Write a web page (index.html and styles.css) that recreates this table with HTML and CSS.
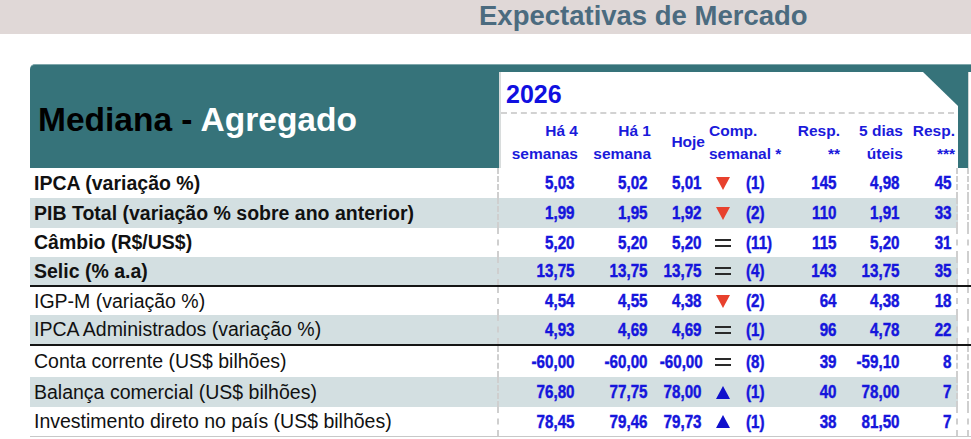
FILE: index.html
```html
<!DOCTYPE html>
<html lang="pt-BR">
<head>
<meta charset="utf-8">
<title>Expectativas de Mercado</title>
<link rel="stylesheet" href="styles.css">
</head>
<body>
<header class="banner"><h1 class="banner-title">Expectativas de Mercado</h1></header>

<section class="board">
  <div class="head">
    <div class="head-title"><span class="dark">Mediana -</span> Agregado</div>
    <div class="year-panel">
      <div class="year">2026</div>
      <div class="cols head-cols">
        <div class="hc">Há 4<br>semanas</div>
        <div class="hc">Há 1<br>semana</div>
        <div class="hc mid">Hoje</div>
        <div class="hc left">Comp.<br>semanal *</div>
        <div class="hc">Resp.<br>**</div>
        <div class="hc">5 dias<br>úteis</div>
        <div class="hc">Resp.<br>***</div>
      </div>
    </div>
    <div class="next-panel"></div>
  </div>

  <div class="body">
    <div class="row h30 bold">
      <div class="label">IPCA (variação %)</div>
      <div class="cols data"><span class="n">5,03</span><span class="n">5,02</span><span class="n">5,01</span><span class="comp"><i class="tri down"></i><span class="p">(1)</span></span><span class="n">145</span><span class="n">4,98</span><span class="n">45</span></div>
      <div class="next"></div>
    </div>
    <div class="row h30 bold shade">
      <div class="label">PIB Total (variação % sobre ano anterior)</div>
      <div class="cols data"><span class="n">1,99</span><span class="n">1,95</span><span class="n">1,92</span><span class="comp"><i class="tri down"></i><span class="p">(2)</span></span><span class="n">110</span><span class="n">1,91</span><span class="n">33</span></div>
      <div class="next"></div>
    </div>
    <div class="row h29 bold">
      <div class="label">Câmbio (R$/US$)</div>
      <div class="cols data"><span class="n">5,20</span><span class="n">5,20</span><span class="n">5,20</span><span class="comp"><i class="eq"></i><span class="p">(11)</span></span><span class="n">115</span><span class="n">5,20</span><span class="n">31</span></div>
      <div class="next"></div>
    </div>
    <div class="row h28 bold shade">
      <div class="label">Selic (% a.a)</div>
      <div class="cols data"><span class="n">13,75</span><span class="n">13,75</span><span class="n">13,75</span><span class="comp"><i class="eq"></i><span class="p">(4)</span></span><span class="n">143</span><span class="n">13,75</span><span class="n">35</span></div>
      <div class="next"></div>
    </div>

    <div class="row h30 sep">
      <div class="label">IGP-M (variação %)</div>
      <div class="cols data"><span class="n">4,54</span><span class="n">4,55</span><span class="n">4,38</span><span class="comp"><i class="tri down"></i><span class="p">(2)</span></span><span class="n">64</span><span class="n">4,38</span><span class="n">18</span></div>
      <div class="next"></div>
    </div>
    <div class="row h29 shade">
      <div class="label">IPCA Administrados (variação %)</div>
      <div class="cols data"><span class="n">4,93</span><span class="n">4,69</span><span class="n">4,69</span><span class="comp"><i class="eq"></i><span class="p">(1)</span></span><span class="n">96</span><span class="n">4,78</span><span class="n">22</span></div>
      <div class="next"></div>
    </div>

    <div class="row h33 sep">
      <div class="label">Conta corrente (US$ bilhões)</div>
      <div class="cols data"><span class="n">-60,00</span><span class="n">-60,00</span><span class="n">-60,00</span><span class="comp"><i class="eq"></i><span class="p">(8)</span></span><span class="n">39</span><span class="n">-59,10</span><span class="n">8</span></div>
      <div class="next"></div>
    </div>
    <div class="row h30 shade">
      <div class="label">Balança comercial (US$ bilhões)</div>
      <div class="cols data"><span class="n">76,80</span><span class="n">77,75</span><span class="n">78,00</span><span class="comp"><i class="tri up"></i><span class="p">(1)</span></span><span class="n">40</span><span class="n">78,00</span><span class="n">7</span></div>
      <div class="next"></div>
    </div>
    <div class="row h30 last">
      <div class="label">Investimento direto no país (US$ bilhões)</div>
      <div class="cols data"><span class="n">78,45</span><span class="n">79,46</span><span class="n">79,73</span><span class="comp"><i class="tri up"></i><span class="p">(1)</span></span><span class="n">38</span><span class="n">81,50</span><span class="n">7</span></div>
      <div class="next"></div>
    </div>
  </div>
</section>
</body>
</html>
```

FILE: styles.css
```css
html, body {
  margin: 0;
  padding: 0;
  background: #ffffff;
  font-family: "Liberation Sans", Arial, sans-serif;
  overflow: hidden;
}

.banner {
  height: 34px;
  background: #e0d8d7;
}

.banner-title {
  margin: 0;
  padding-left: 479px;
  font-size: 27.5px;
  line-height: 31px;
  font-weight: bold;
  color: #4b6b7f;
  white-space: nowrap;
}

.board {
  margin-top: 30px;
  margin-left: 30px;
  width: 942px;
}

/* ---------- header ---------- */
.head {
  display: grid;
  grid-template-columns: 469px 459px 14px;
  height: 104px;
  background: #36737a;
  border-top: 1px solid #7fa7ab;
  border-top-left-radius: 5px;
  box-sizing: border-box;
}

.head-title {
  padding: 37px 0 0 8px;
  font-size: 33.5px;
  line-height: 36px;
  font-weight: bold;
  color: #ffffff;
  white-space: nowrap;
}

.head-title .dark {
  color: #000000;
}

.year-panel {
  margin-top: 7px;
  background: #ffffff;
  border-left: 2px solid #d8dcdc;
  clip-path: polygon(0 0, 424px 0, 459px 34px, 459px 100%, 0 100%);
}

.year {
  margin-right: 4px;
  padding: 8px 0 4px 5px;
  font-size: 25px;
  line-height: 28px;
  font-weight: bold;
  color: #1010e0;
  border-bottom: 2px dashed #d2d2d2;
}

.cols {
  display: grid;
  grid-template-columns: 78px 73px 54px 84px 51px 63px 52px;
}

.head-cols {
  padding-top: 5px;
}

.hc {
  font-size: 15.5px;
  line-height: 23px;
  font-weight: bold;
  color: #1a1adb;
  text-align: right;
  padding-right: 1px;
  white-space: nowrap;
}

.hc.mid {
  align-self: center;
  padding-bottom: 2px;
}

.hc.left {
  text-align: left;
  padding-left: 3px;
  padding-right: 0;
}

.next-panel {
  margin: 7px 0 0 10px;
  background: #ffffff;
  border-left: 1px solid #cfd6d6;
}

/* ---------- body ---------- */
.row {
  display: grid;
  grid-template-columns: 469px 459px 14px;
  box-sizing: border-box;
}

.h28 { height: 28px; }
.h29 { height: 29px; }
.h30 { height: 30px; }
.h33 { height: 33px; }

.row.sep {
  border-top: 2px solid #151515;
}

.row.last {
  border-bottom: 1px solid #c8c8c8;
}

.label {
  display: flex;
  align-items: center;
  padding-left: 4px;
  font-size: 19.5px;
  color: #111111;
  white-space: nowrap;
}

.bold .label {
  font-weight: bold;
}

.data {
  align-items: center;
  border-left: 2px dashed #cfcfcf;
  border-right: 2px dashed #cfcfcf;
  font-family: "Liberation Sans", Arial, sans-serif;
  font-weight: bold;
  font-size: 18.5px;
  color: #1515dc;
  -webkit-text-stroke: 0.45px #1515dc;
  margin-left: -2px;
  box-sizing: border-box;
  width: 461px;
}

.shade .label,
.shade .data {
  background: #d3dfe1;
}

.n {
  display: block;
  text-align: right;
  padding-right: 3px;
  white-space: nowrap;
  transform: scaleX(0.82);
  transform-origin: right center;
}

.comp {
  display: flex;
  align-items: center;
  padding-left: 12px;
}

.p {
  display: block;
  margin-left: 16px;
  transform: scaleX(0.82);
  transform-origin: left center;
}

.tri {
  display: block;
  width: 0;
  height: 0;
  border-left: 7px solid transparent;
  border-right: 7px solid transparent;
}

.tri.down {
  border-top: 13px solid #e8412d;
}

.tri.up {
  border-bottom: 13px solid #1010cc;
}

.eq {
  display: block;
  width: 16px;
  height: 8px;
  border-top: 2px solid #2a2a2a;
  border-bottom: 2px solid #2a2a2a;
  box-sizing: border-box;
  margin-left: -1px;
  margin-right: -1px;
}

.next {
  margin-left: 9px;
  border-left: 2px dashed #cfcfcf;
}
```
